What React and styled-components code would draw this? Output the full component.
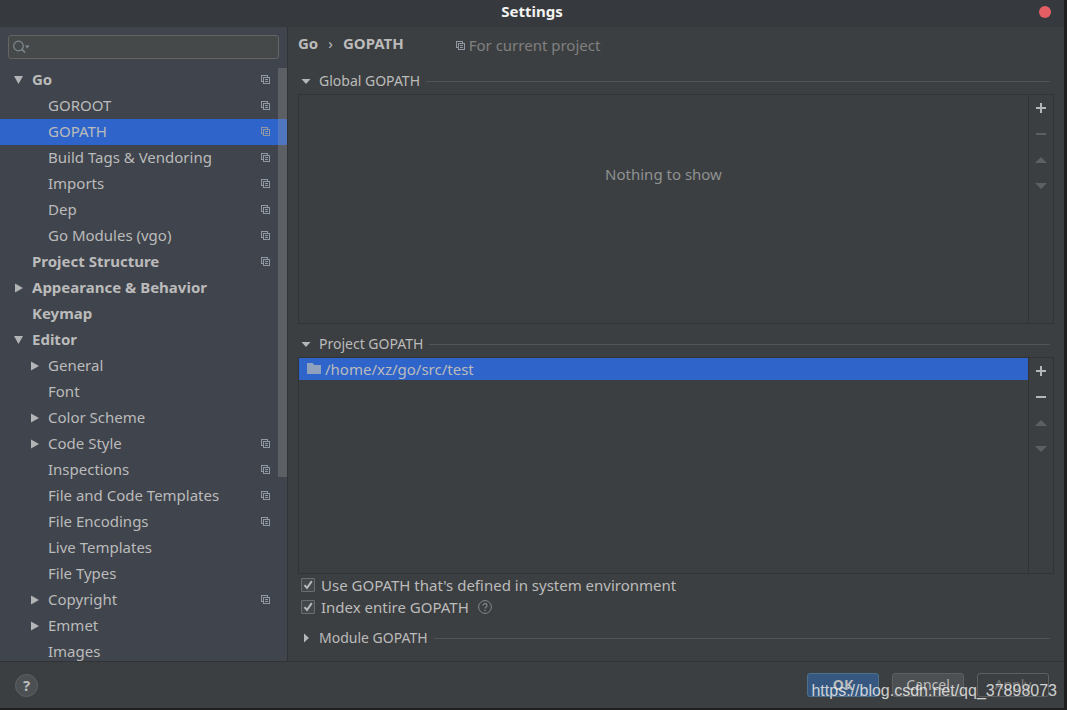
import React, { useState } from 'react';
import styled, { createGlobalStyle } from 'styled-components';

const GlobalStyle = createGlobalStyle`
    * { box-sizing: border-box; }
    body {
        margin: 0;
        background: #1f1f1f;
        color: #bbbbbb;
        font-family: "Noto Sans", "Open Sans", sans-serif;
        font-size: 15px;
        line-height: 20px;
    }
    button, input { font: inherit; color: inherit; }
    button { margin: 0; padding: 0; border: 0; background: none; }
`;

const Window = styled.div`
    position: relative;
    display: flex;
    flex-direction: column;
    height: 100vh;
    border: solid #1f1f1f;
    border-width: 0 3px 2px 0;
    background: #3c3f41;
`;

const TitleBar = styled.header`
    display: grid;
    grid-template-columns: 1fr auto 1fr;
    align-items: center;
    flex: none;
    height: 27px;
    padding: 0 13px 3px;
    background: #36393d;
`;

const Title = styled.h1`
    grid-column: 2;
    margin: 0;
    padding-bottom: 2px;
    color: #f2f2f2;
    font-size: 15px;
    line-height: 20px;
`;

const CloseButton = styled.button`
    justify-self: end;
    width: 12px;
    height: 12px;
    border-radius: 50%;
    background: #e55e64;
`;

const Body = styled.div`
    display: flex;
    flex: 1;
    min-height: 0;
`;

const Sidebar = styled.nav`
    position: relative;
    display: flex;
    flex-direction: column;
    flex: none;
    width: 288px;
    border-right: 1px solid #313335;
    background: #40444c;
    overflow: hidden;
`;

const SearchBox = styled.label`
    display: flex;
    align-items: center;
    flex: none;
    height: 24px;
    margin: 8px;
    padding: 0 4px;
    border: 1px solid #646464;
    border-radius: 3px;
    background: #45494a;
`;

const SearchInput = styled.input`
    flex: 1;
    min-width: 0;
    height: 20px;
    padding: 0 4px;
    border: 0;
    outline: 0;
    background: none;
`;

const Tree = styled.ul`
    margin: 0;
    padding: 0;
    list-style: none;
`;

const TreeRow = styled.button`
    display: flex;
    align-items: center;
    width: 100%;
    height: 26px;
    padding: 0 17px 2px ${props => props.$level ? 28 : 12}px;
    background: ${props => props.$selected ? "#2f65ca" : "none"};
    font-weight: ${props => props.$level ? 400 : 700};
    text-align: left;
    white-space: nowrap;
`;

const ArrowCell = styled.span`
    display: flex;
    justify-content: center;
    flex: none;
    width: 14px;
    margin-right: 6px;
`;

const RowLabel = styled.span`
    flex: 1;
`;

const ScrollThumb = styled.div`
    position: absolute;
    top: 41px;
    right: 0;
    width: 9px;
    height: 409px;
    background: rgba(166, 166, 166, 0.28);
    pointer-events: none;
`;

const Content = styled.main`
    display: flex;
    flex-direction: column;
    flex: 1;
    min-width: 0;
    padding: 0 10px 10px;
`;

const PageHeader = styled.div`
    display: flex;
    flex: none;
    height: 41px;
    padding-top: 6px;
`;

const Breadcrumb = styled.h2`
    display: flex;
    gap: 10px;
    margin: 0;
    font-size: 15px;
    line-height: 20px;
`;

const Chevron = styled.span`
    font-weight: 400;
`;

const Scope = styled.span`
    display: flex;
    align-items: center;
    gap: 4px;
    height: 24px;
    margin-left: 52px;
    color: #808080;
`;

const SectionHeader = styled.button`
    display: flex;
    align-items: center;
    flex: none;
    gap: 6px;
    height: 26px;
    margin-top: ${props => props.$spaced ? 7 : 0}px;
    padding-right: 4px;
    font-size: 14px;
    text-align: left;

    &::after {
        content: "";
        flex: 1;
        height: 1px;
        background: #515455;
    }
`;

const ListPanel = styled.section`
    display: flex;
    flex: 1 1 ${props => props.$basis}px;
    min-height: 108px;
    border: 1px solid #313335;
`;

const PathList = styled.div`
    flex: 1;
    min-width: 0;
`;

const EmptyText = styled.p`
    margin: 0;
    padding-top: 69px;
    color: #8f9192;
    text-align: center;
`;

const PathRow = styled.div`
    display: flex;
    align-items: center;
    gap: 4px;
    height: 22px;
    padding-left: 8px;
    background: #2f65ca;
`;

const ListToolbar = styled.div`
    display: flex;
    flex-direction: column;
    flex: none;
    width: 25px;
    border-left: 1px solid #313335;
`;

const ToolButton = styled.button`
    display: flex;
    align-items: center;
    justify-content: center;
    height: 26px;
    color: ${props => props.disabled ? "#5d5f60" : "#b4b6b7"};
`;

const CheckLabel = styled.label`
    display: flex;
    align-items: center;
    flex: none;
    gap: 6px;
    height: 22px;
    padding-left: 3px;
`;

const CheckBox = styled.input`
    appearance: none;
    width: 14px;
    height: 14px;
    margin: 0;
    border: 1px solid #6b6e70;
    border-radius: 1px;
    background: #43494a;

    &:checked {
        background: #43494a url("data:image/svg+xml,%3Csvg xmlns='http://www.w3.org/2000/svg' viewBox='0 0 12 12'%3E%3Cpath d='M2.5 6.2 5 9 9.8 2.2' fill='none' stroke='%23b8babb' stroke-width='2'/%3E%3C/svg%3E");
    }
`;

const HintIcon = styled.svg`
    margin-left: 3px;
    color: #85888a;
`;

const Footer = styled.footer`
    display: flex;
    align-items: center;
    flex: none;
    gap: 13px;
    height: 47px;
    padding: 0 15px;
    border-top: 1px solid #313335;
`;

const HelpButton = styled.button`
    width: 23px;
    height: 23px;
    margin-right: auto;
    border: 1px solid #5f6263;
    border-radius: 50%;
    background: #4c5052;
    font-weight: 700;
    line-height: 20px;
`;

const DialogButton = styled.button`
    width: 72px;
    height: 24px;
    border: 1px solid ${props => props.$primary ? "#4c708c" : "#5e6060"};
    border-radius: 3px;
    background: ${props => props.$primary ? "#365880" : "#4c5052"};
    font-size: 14px;
    font-weight: ${props => props.$primary ? 700 : 400};
    line-height: 20px;

    &:disabled {
        background: #3c3f41;
        color: #777777;
    }
`;

const Watermark = styled.div`
    position: absolute;
    right: 7px;
    bottom: 7px;
    color: rgba(235, 235, 235, 0.85);
    font: 16px/20px "Liberation Sans", Arial, sans-serif;
    pointer-events: none;
`;

const ProjectIcon = () => (
    <svg width="9" height="9" viewBox="0 0 9 9" fill="none" stroke="#8f98a3" shapeRendering="crispEdges" aria-hidden="true">
        <path d="M2 6.5H.5V.5H6.5V2" />
        <rect x="2.5" y="2.5" width="6" height="6" />
        <path d="M4 4.5H7M4 6.5H7" />
    </svg>
);

const TreeArrow = ({ open }) => (
    <svg width="10" height="12" viewBox="0 0 10 12" fill="#b2b4b6" aria-hidden="true">
        <path d={open ? "M0 3H9L4.5 11Z" : "M1 2.5L9 7L1 11.5Z"} />
    </svg>
);

const SectionArrow = ({ open }) => (
    <svg width="15" height="10" viewBox="0 0 15 10" fill="#b4b6b7" aria-hidden="true">
        <path d={open ? "M3.5 3H12.5L8 8Z" : "M6 .5L11 5L6 9.5Z"} />
    </svg>
);

const SearchIcon = () => (
    <svg width="17" height="14" viewBox="0 0 17 14" fill="none" stroke="#7f8b91" aria-hidden="true">
        <circle cx="5.5" cy="6" r="4.8" strokeWidth="1.2" />
        <path d="M8.8 9.3L12 12.5" strokeWidth="1.6" />
        <path d="M12 5.5H16.5L14.2 8.5Z" fill="#7f8b91" stroke="none" />
    </svg>
);

const FolderIcon = () => (
    <svg width="14" height="12" viewBox="0 0 14 12" fill="#8fa1bd" aria-hidden="true">
        <path d="M0 0H5.5L7.5 2H14V11H0Z" />
    </svg>
);

const toolShapes = {
    Add: "M5 1H7V5H11V7H7V11H5V7H1V5H5Z",
    Remove: "M1 5H11V7H1Z",
    "Move up": "M0 9L6 3L12 9Z",
    "Move down": "M0 3H12L6 9Z",
};

const treeItems = [
    { label: "Go", level: 0, open: true, project: true },
    { label: "GOROOT", level: 1, project: true },
    { label: "GOPATH", level: 1, project: true },
    { label: "Build Tags & Vendoring", level: 1, project: true },
    { label: "Imports", level: 1, project: true },
    { label: "Dep", level: 1, project: true },
    { label: "Go Modules (vgo)", level: 1, project: true },
    { label: "Project Structure", level: 0, project: true },
    { label: "Appearance & Behavior", level: 0, open: false },
    { label: "Keymap", level: 0 },
    { label: "Editor", level: 0, open: true },
    { label: "General", level: 1, open: false },
    { label: "Font", level: 1 },
    { label: "Color Scheme", level: 1, open: false },
    { label: "Code Style", level: 1, open: false, project: true },
    { label: "Inspections", level: 1, project: true },
    { label: "File and Code Templates", level: 1, project: true },
    { label: "File Encodings", level: 1, project: true },
    { label: "Live Templates", level: 1 },
    { label: "File Types", level: 1 },
    { label: "Copyright", level: 1, open: false, project: true },
    { label: "Emmet", level: 1, open: false },
    { label: "Images", level: 1 },
];

const SettingsTree = ({ selected, onSelect }) => (
    <Tree>
        {treeItems.map(item => (
            <li key={item.label}>
                <TreeRow
                    type="button"
                    $level={item.level}
                    $selected={item.label === selected}
                    onClick={() => onSelect(item.label)}
                >
                    <ArrowCell>{item.open !== undefined && <TreeArrow open={item.open} />}</ArrowCell>
                    <RowLabel>{item.label}</RowLabel>
                    {item.project && <ProjectIcon />}
                </TreeRow>
            </li>
        ))}
    </Tree>
);

const PathPanel = ({ basis, enabled, children }) => (
    <ListPanel $basis={basis}>
        <PathList>{children}</PathList>
        <ListToolbar>
            {Object.keys(toolShapes).map(name => (
                <ToolButton key={name} type="button" aria-label={name} disabled={!enabled.includes(name)}>
                    <svg width="12" height="12" viewBox="0 0 12 12" fill="currentColor" aria-hidden="true">
                        <path d={toolShapes[name]} />
                    </svg>
                </ToolButton>
            ))}
        </ListToolbar>
    </ListPanel>
);

const App = () => {
    const [selected, setSelected] = useState("GOPATH");

    return <>
        <GlobalStyle />
        <Window>
            <TitleBar>
                <Title>Settings</Title>
                <CloseButton type="button" aria-label="Close" />
            </TitleBar>
            <Body>
                <Sidebar>
                    <SearchBox>
                        <SearchIcon />
                        <SearchInput type="text" aria-label="Search settings" />
                    </SearchBox>
                    <SettingsTree selected={selected} onSelect={setSelected} />
                    <ScrollThumb />
                </Sidebar>
                <Content>
                    <PageHeader>
                        <Breadcrumb>
                            <span>Go</span>
                            <Chevron>›</Chevron>
                            <span>GOPATH</span>
                        </Breadcrumb>
                        <Scope><ProjectIcon />For current project</Scope>
                    </PageHeader>
                    <SectionHeader type="button"><SectionArrow open />Global GOPATH</SectionHeader>
                    <PathPanel basis={230} enabled={["Add"]}>
                        <EmptyText>Nothing to show</EmptyText>
                    </PathPanel>
                    <SectionHeader type="button" $spaced><SectionArrow open />Project GOPATH</SectionHeader>
                    <PathPanel basis={217} enabled={["Add", "Remove"]}>
                        <PathRow><FolderIcon />/home/xz/go/src/test</PathRow>
                    </PathPanel>
                    <CheckLabel>
                        <CheckBox type="checkbox" defaultChecked />
                        Use GOPATH that's defined in system environment
                    </CheckLabel>
                    <CheckLabel>
                        <CheckBox type="checkbox" defaultChecked />
                        Index entire GOPATH
                        <HintIcon width="14" height="14" viewBox="0 0 14 14" fill="none" stroke="currentColor" aria-hidden="true">
                            <circle cx="7" cy="7" r="6.4" />
                            <path d="M5 5.5C5 3 9 3 9 5.5C9 7 7 6.8 7 8.5M7 9.7V11" strokeWidth="1.2" />
                        </HintIcon>
                    </CheckLabel>
                    <SectionHeader type="button" $spaced><SectionArrow />Module GOPATH</SectionHeader>
                </Content>
            </Body>
            <Footer>
                <HelpButton type="button" aria-label="Help">?</HelpButton>
                <DialogButton type="button" $primary>OK</DialogButton>
                <DialogButton type="button">Cancel</DialogButton>
                <DialogButton type="button" disabled>Apply</DialogButton>
            </Footer>
            <Watermark>https://blog.csdn.net/qq_37898073</Watermark>
        </Window>
    </>;
};

export default App;
